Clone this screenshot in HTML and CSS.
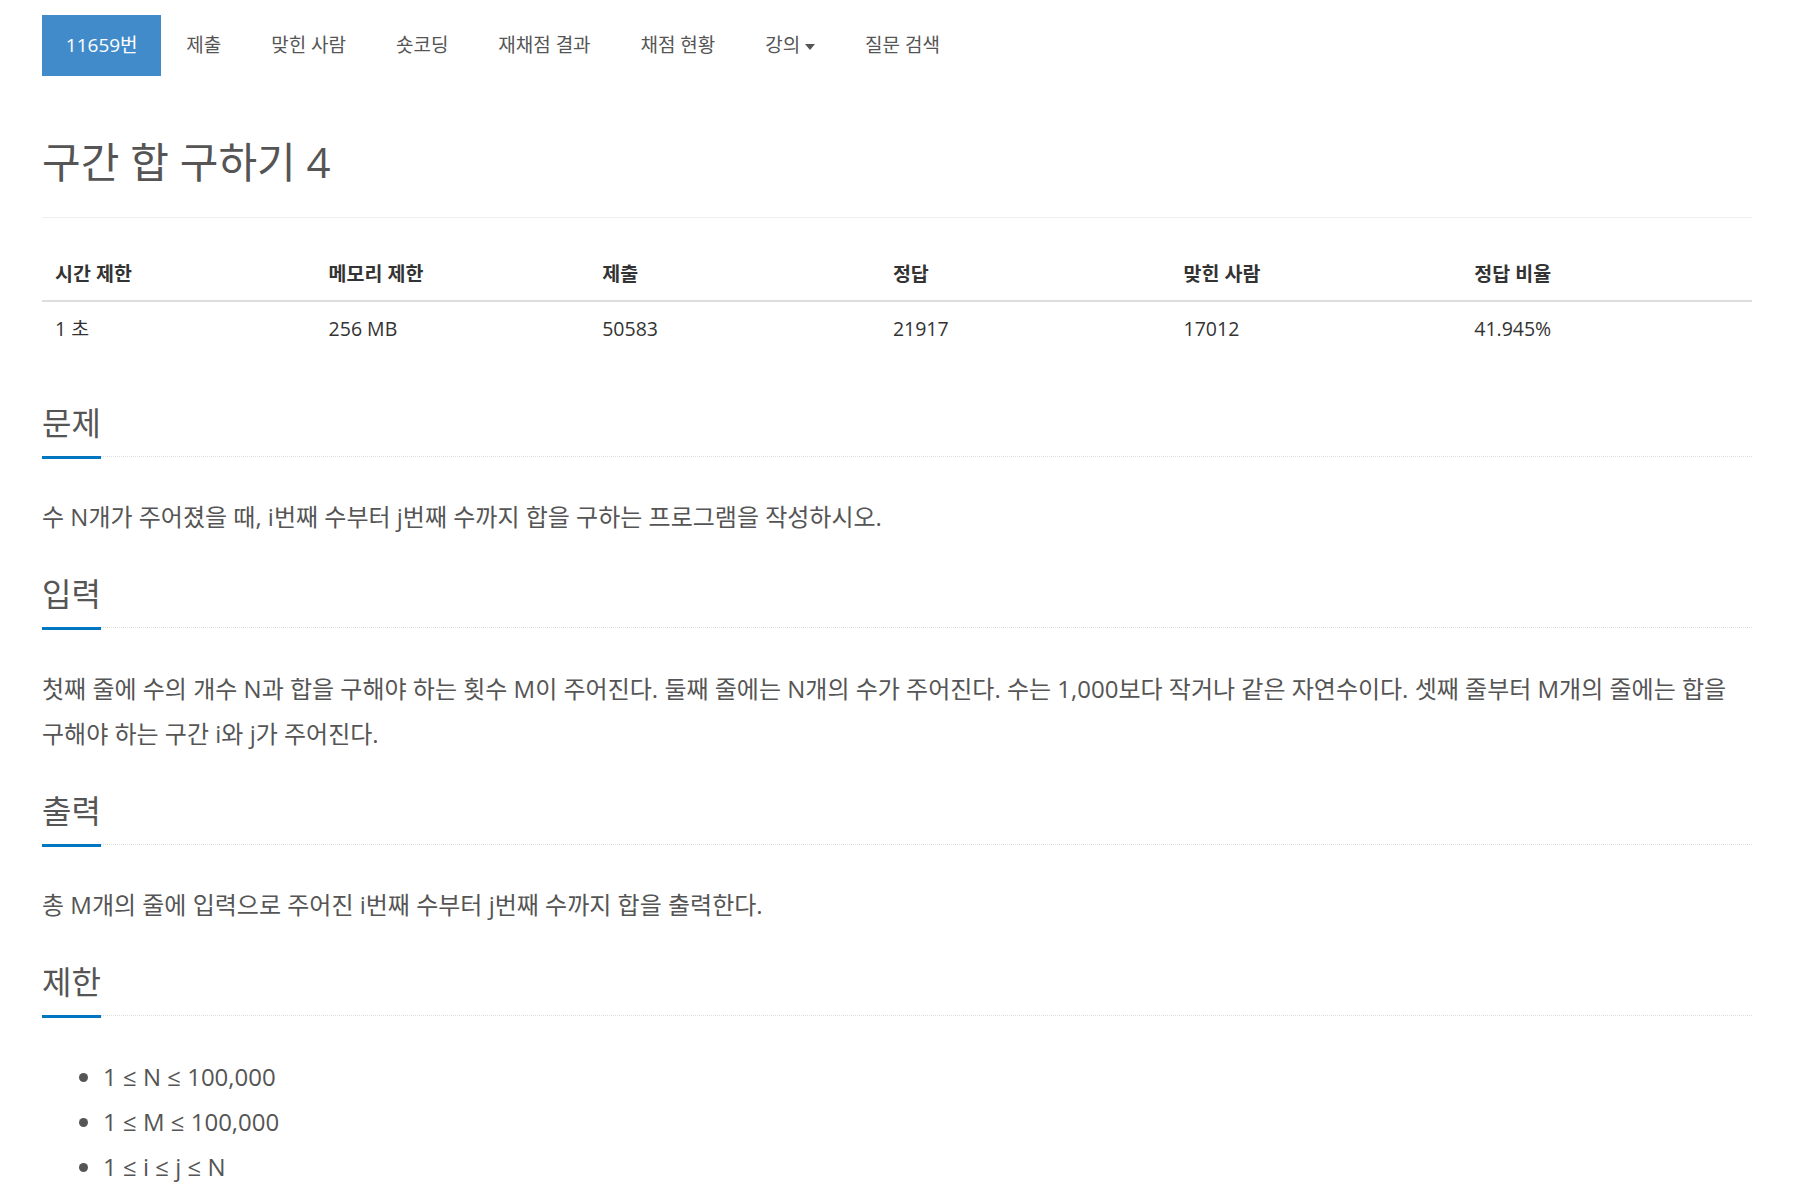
FILE: index.html
```html
<!DOCTYPE html>
<html lang="ko">
<head>
<meta charset="utf-8">
<title>구간 합 구하기 4</title>
<link rel="stylesheet" href="styles.css">
</head>
<body>
<div class="container">
  <ul class="problem-menu">
    <li class="active"><a href="#">11659번</a></li>
    <li><a href="#">제출</a></li>
    <li><a href="#">맞힌 사람</a></li>
    <li><a href="#">숏코딩</a></li>
    <li><a href="#">재채점 결과</a></li>
    <li><a href="#">채점 현황</a></li>
    <li><a href="#">강의<span class="caret"></span></a></li>
    <li><a href="#">질문 검색</a></li>
  </ul>

  <div class="page-header">
    <h1 class="problem-title">구간 합 구하기 4</h1>
  </div>

  <table class="info-table">
    <thead>
      <tr>
        <th class="w16">시간 제한</th>
        <th class="w16">메모리 제한</th>
        <th class="w17">제출</th>
        <th class="w17">정답</th>
        <th class="w17">맞힌 사람</th>
        <th class="w17">정답 비율</th>
      </tr>
    </thead>
    <tbody>
      <tr>
        <td>1 초</td>
        <td>256 MB</td>
        <td>50583</td>
        <td>21917</td>
        <td>17012</td>
        <td>41.945%</td>
      </tr>
    </tbody>
  </table>

  <section class="problem-section first">
    <div class="headline"><h2>문제</h2></div>
    <p class="problem-text">수 N개가 주어졌을 때, i번째 수부터 j번째 수까지 합을 구하는 프로그램을 작성하시오.</p>
  </section>

  <section class="problem-section">
    <div class="headline"><h2>입력</h2></div>
    <p class="problem-text">첫째 줄에 수의 개수 N과 합을 구해야 하는 횟수 M이 주어진다. 둘째 줄에는 N개의 수가 주어진다. 수는 1,000보다 작거나 같은 자연수이다. 셋째 줄부터 M개의 줄에는 합을 구해야 하는 구간 i와 j가 주어진다.</p>
  </section>

  <section class="problem-section">
    <div class="headline"><h2>출력</h2></div>
    <p class="problem-text">총 M개의 줄에 입력으로 주어진 i번째 수부터 j번째 수까지 합을 출력한다.</p>
  </section>

  <section class="problem-section">
    <div class="headline"><h2>제한</h2></div>
    <ul class="limit-list">
      <li>1 ≤ N ≤ 100,000</li>
      <li>1 ≤ M ≤ 100,000</li>
      <li>1 ≤ i ≤ j ≤ N</li>
    </ul>
  </section>
</div>
</body>
</html>
```
FILE: styles.css
```css
html, body {
  margin: 0;
  padding: 0;
  background: #fff;
}

body {
  font-family: "Open Sans", "Noto Sans CJK KR", sans-serif;
  color: #555;
}

.container {
  width: 1710px;
  padding: 15px 0 0 42px;
}

/* navigation */
.problem-menu {
  display: flex;
  list-style: none;
  margin: 0;
  padding: 0;
  height: 61px;
}

.problem-menu li a {
  display: block;
  height: 61px;
  line-height: 61px;
  padding: 0 24.95px;
  font-size: 19px;
  color: #555;
  text-decoration: none;
}

.problem-menu li.active a {
  background: #428bca;
  color: #fff;
  padding: 0 23.8px;
}

.caret {
  display: inline-block;
  width: 0;
  height: 0;
  margin-left: 5px;
  vertical-align: middle;
  border-top: 6px solid #555;
  border-left: 5.5px solid transparent;
  border-right: 5.5px solid transparent;
}

/* title */
.page-header {
  margin-top: 61px;
  padding-bottom: 30px;
  border-bottom: 1px solid #eee;
}

.problem-title {
  margin: 0;
  font-size: 42px;
  line-height: 50px;
  font-weight: 400;
  color: #555;
}

/* info table */
.info-table {
  width: 100%;
  border-collapse: collapse;
  margin-top: 30px;
  font-size: 19.5px;
  color: #333;
}

.info-table .w16 { width: 16%; }
.info-table .w17 { width: 17%; }

.info-table th,
.info-table td {
  text-align: left;
  line-height: 27px;
  padding: 12px 13px 13px;
}

.info-table th {
  font-weight: 700;
  border-bottom: 2px solid #ddd;
}

.info-table td {
  font-weight: 400;
  color: #333;
  padding-top: 13px;
}

/* sections */
.problem-section.first {
  margin-top: 50px;
}

.headline {
  display: flex;
  border-bottom: 1px dotted #ddd;
}

.headline h2 {
  margin: 0 0 -3px;
  font-size: 32px;
  line-height: 36px;
  font-weight: 400;
  color: #555;
  padding-bottom: 15px;
  border-bottom: 3px solid #0076c0;
}

.problem-text {
  margin: 37.2px 0 37.2px;
  font-size: 24px;
  line-height: 45px;
  color: #555;
}

.limit-list {
  margin: 38px 0 0;
  padding-left: 61px;
  font-size: 24px;
  line-height: 45px;
  color: #555;
}
```
